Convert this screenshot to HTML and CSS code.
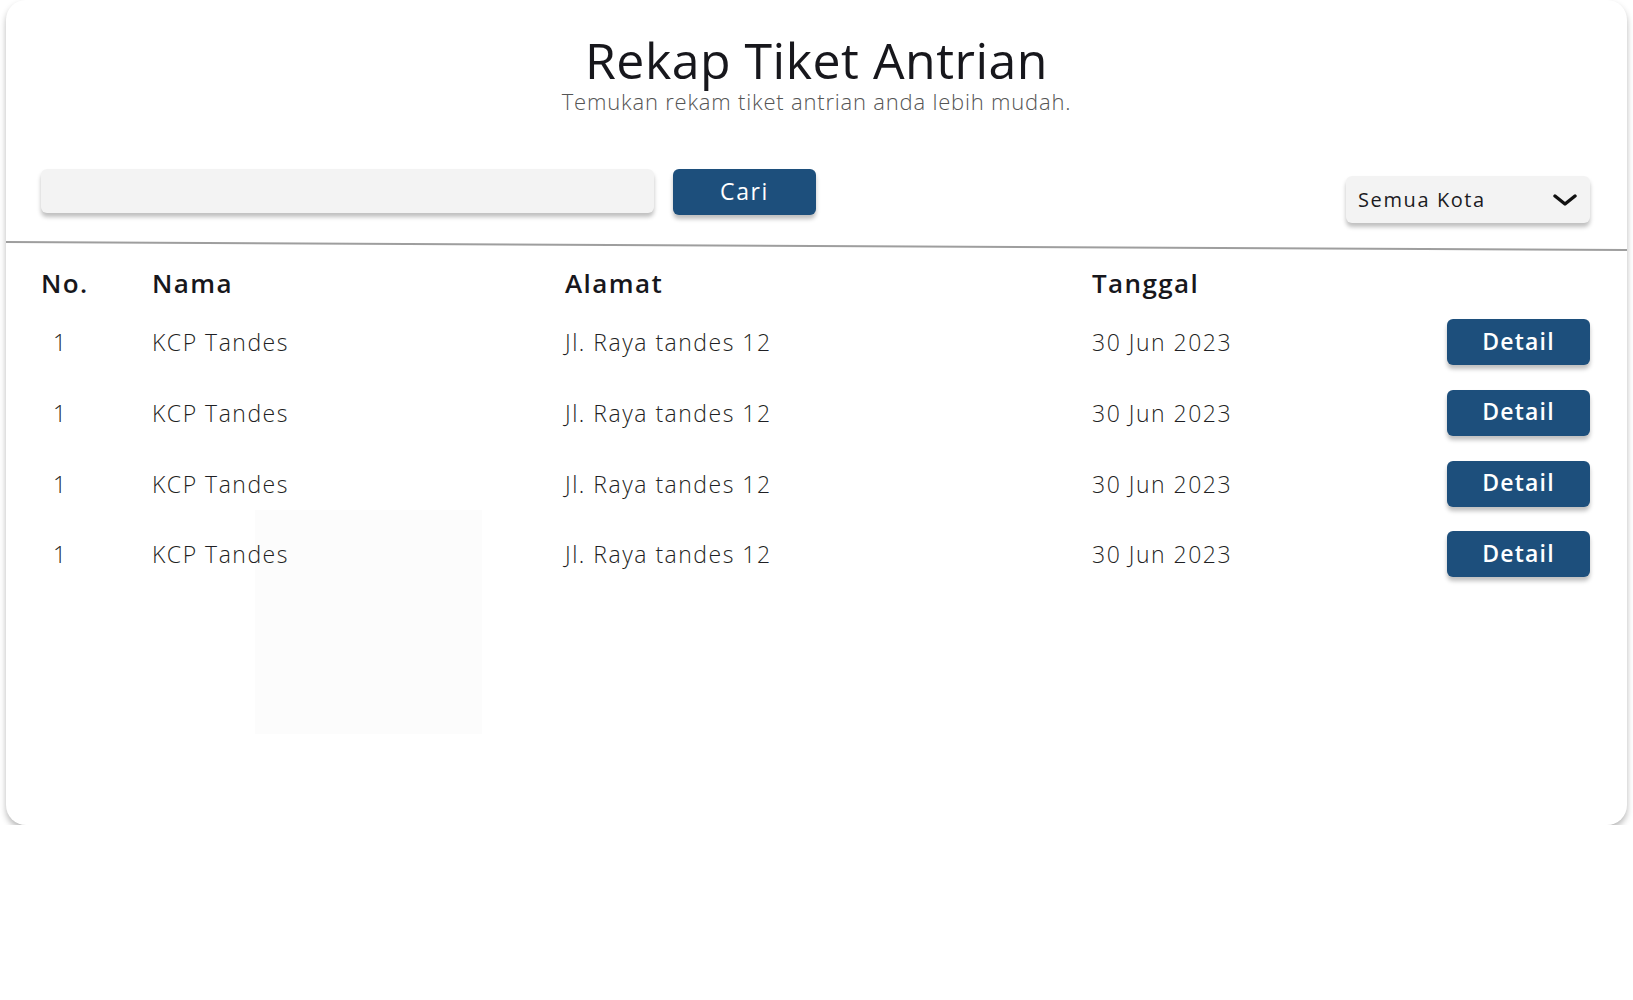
FILE: index.html
```html
<!DOCTYPE html>
<html lang="id">
<head>
<meta charset="utf-8">
<title>Rekap Tiket Antrian</title>
<link rel="stylesheet" href="styles.css">
</head>
<body>
<main class="card">
  <div class="ghost"></div>
  <header class="head">
    <h1 class="title">Rekap Tiket Antrian</h1>
    <p class="subtitle">Temukan rekam tiket antrian anda lebih mudah.</p>
  </header>

  <div class="toolbar">
    <input class="search" type="text" aria-label="Cari">
    <button class="btn btn-search">Cari</button>
    <div class="spacer"></div>
    <div class="select">
      <span>Semua Kota</span>
      <svg class="chev" width="24" height="12" viewBox="0 0 24 12"><path d="M2 2 L12 10 L22 2" fill="none" stroke="#111" stroke-width="3.4" stroke-linecap="round" stroke-linejoin="round"/></svg>
    </div>
  </div>

  <div class="divider"></div>

  <div class="table">
    <div class="row thead">
      <div>No.</div><div>Nama</div><div>Alamat</div><div>Tanggal</div><div></div>
    </div>
    <div class="row">
      <div class="no">1</div><div>KCP Tandes</div><div>Jl. Raya tandes 12</div><div>30 Jun 2023</div><button class="btn">Detail</button>
    </div>
    <div class="row">
      <div class="no">1</div><div>KCP Tandes</div><div>Jl. Raya tandes 12</div><div>30 Jun 2023</div><button class="btn">Detail</button>
    </div>
    <div class="row">
      <div class="no">1</div><div>KCP Tandes</div><div>Jl. Raya tandes 12</div><div>30 Jun 2023</div><button class="btn">Detail</button>
    </div>
    <div class="row">
      <div class="no">1</div><div>KCP Tandes</div><div>Jl. Raya tandes 12</div><div>30 Jun 2023</div><button class="btn">Detail</button>
    </div>
  </div>
</main>
</body>
</html>
```

FILE: styles.css
```css
* { box-sizing: border-box; }
html, body { margin: 0; padding: 0; background: #fff; }
body {
  font-family: "Open Sans", "Noto Sans", sans-serif;
  color: #1b1b1f;
}
.card {
  position: relative;
  margin: 0 6px;
  height: 825px;
  background: #fff;
  border-radius: 20px;
  box-shadow: 0 4px 6px rgba(0,0,0,0.28);
}
.head {
  position: relative;
  text-align: center;
  padding-top: 34px;
}
.title {
  margin: 0;
  font-size: 50px;
  line-height: 52px;
  font-weight: 500;
  letter-spacing: 0.5px;
  color: #17171c;
}
.subtitle {
  margin: 3px 0 0;
  font-size: 22px;
  line-height: 24px;
  font-weight: 300;
  letter-spacing: 0.8px;
  color: #555;
}
.toolbar {
  position: relative;
  display: flex;
  align-items: flex-start;
  padding: 0 37px 0 35px;
  margin-top: 56px;
}
.search {
  width: 613px;
  height: 44px;
  border: 0;
  border-radius: 6px;
  background: #f3f3f3;
  box-shadow: 0 4px 4px rgba(0,0,0,0.25);
  outline: none;
}
.btn {
  width: 143px;
  height: 46px;
  border: 0;
  border-radius: 6px;
  background: #1d4f7c;
  color: #fff;
  font-family: "Open Sans", sans-serif;
  font-size: 23px;
  font-weight: 600;
  letter-spacing: 1.2px;
  box-shadow: 0 4px 4px rgba(0,0,0,0.25);
  padding: 0 0 3px;
  cursor: pointer;
}
.btn-search { margin-left: 19px; letter-spacing: 1.6px; font-weight: 500; }
.spacer { flex: 1; }
.select {
  margin-top: 7px;
  width: 244px;
  height: 47px;
  display: flex;
  align-items: center;
  justify-content: space-between;
  padding: 0 13px 0 12px;
  background: #f3f3f3;
  border-radius: 6px;
  box-shadow: 0 4px 4px rgba(0,0,0,0.25);
  font-size: 20px;
  font-weight: 500;
  letter-spacing: 1.6px;
  color: #1b1b1f;
}
.chev { display: block; }
.divider {
  margin-top: 22px;
  height: 2px;
  background: #9e9e9e;
  transform: rotate(0.28deg);
}
.table {
  position: relative;
  padding: 0 37px 0 35px;
  margin-top: 18px;
}
.row {
  display: grid;
  grid-template-columns: 111px 413px 527px 1fr 143px;
  align-items: center;
  height: 46px;
  margin-bottom: 24.8px;
  font-size: 23px;
  font-weight: 300;
  letter-spacing: 1.5px;
  color: #1f1f24;
}
.row.thead {
  height: 32px;
  margin-bottom: 22px;
  font-size: 26px;
  font-weight: 600;
  letter-spacing: 1.4px;
  color: #17171c;
}
.no { padding-left: 12px; }
.ghost {
  position: absolute;
  left: 249px;
  top: 510px;
  width: 227px;
  height: 224px;
  background: #fcfcfc;
}
```
